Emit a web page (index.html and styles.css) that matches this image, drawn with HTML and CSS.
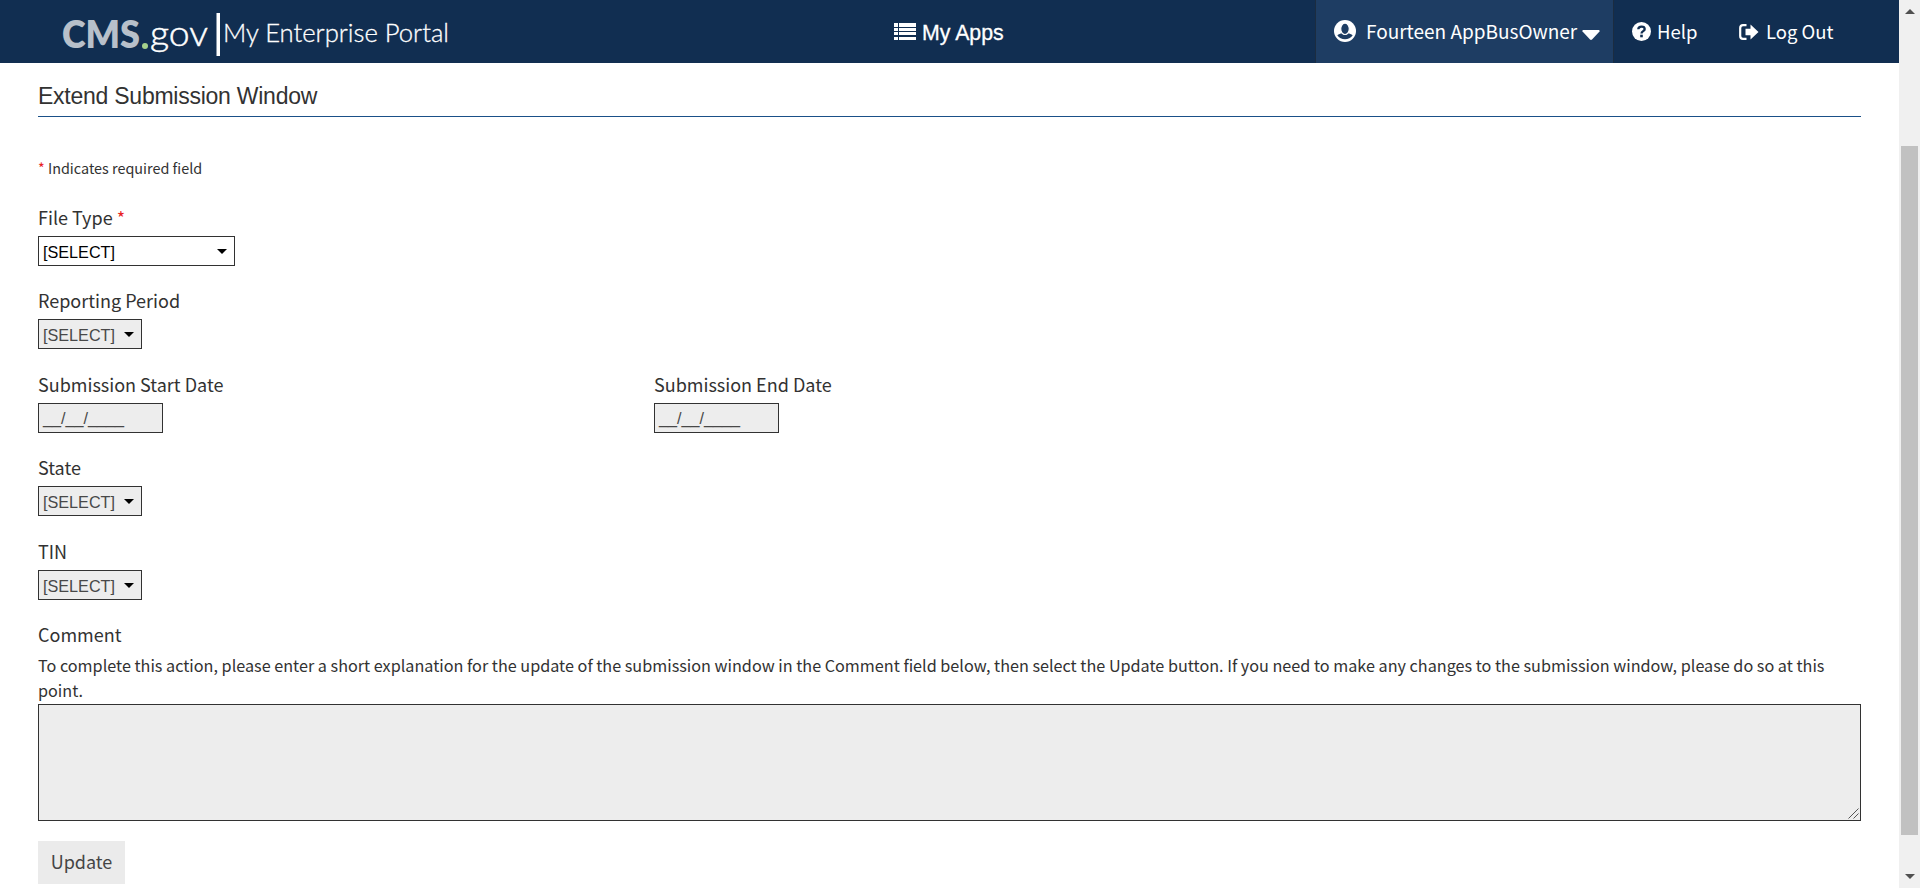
FILE: index.html
```html
<!DOCTYPE html>
<html lang="en">
<head>
<meta charset="utf-8">
<title>Extend Submission Window</title>
<link rel="stylesheet" href="styles.css">
</head>
<body>
<div class="page">
  <div class="viewport">
    <header class="topbar">
      <svg class="logo" width="400" height="63" viewBox="0 0 400 63">
        <text class="logo-cms" x="1" y="48" textLength="78" lengthAdjust="spacingAndGlyphs">CMS</text>
        <circle cx="84" cy="46" r="3" fill="#a5d28c"/>
        <text class="logo-gov" x="89" y="46" textLength="58" lengthAdjust="spacingAndGlyphs">gov</text>
        <rect x="155.500" y="13" width="3.500" height="43" fill="#fff"/>
        <text class="logo-mep" x="162" y="42" textLength="226" lengthAdjust="spacingAndGlyphs">My Enterprise Portal</text>
      </svg>
      <a class="apps">
        <svg width="22" height="17" viewBox="0 0 22 17" fill="#fff"><path d="M0 0h4v4H0zM5 0h17v4H5zM0 5h4v3H0zM5 5h17v3H5zM0 9h4v3H0zM5 9h17v3H5zM0 14h4v3H0zM5 14h17v3H5z"/></svg>
        <span>My Apps</span>
      </a>
      <nav class="links">
        <a class="user">
          <svg class="avatar" width="22" height="22" viewBox="0 0 22 22"><circle cx="11" cy="11" r="11" fill="#fff"/><path d="M3.300 15.300C4.800 14 6.300 13.700 8 13.300 9.500 15 12.500 15 14 13.300 15.700 13.700 17.200 14 18.700 15.300 15.300 20.500 6.700 20.500 3.300 15.300Z" fill="#1e3d63"/><ellipse cx="11" cy="8.800" rx="4.300" ry="5.700" fill="#1e3d63" stroke="#fff" stroke-width="1.200"/></svg>
          <span class="user-name">Fourteen AppBusOwner</span>
          <svg class="user-caret" width="18" height="10" viewBox="0 0 18 10"><path d="M1 0h16q1 .5.500 1.500L10 9.500q-1 .8-2 0L.5 1.500Q0 .5 1 0z" fill="#fff"/></svg>
        </a>
        <a class="help">
          <svg width="19" height="19" viewBox="0 0 19 19"><circle cx="9.500" cy="9.500" r="9.500" fill="#fff"/><path d="M6.300 7.200C6.500 3.800 12.500 3.700 12.700 7 12.800 9.200 9.500 9 9.500 11.500" fill="none" stroke="#112e51" stroke-width="2.300"/><rect x="8.200" y="12.700" width="2.600" height="2.600" fill="#112e51"/></svg>
          <span>Help</span>
        </a>
        <a class="logout">
          <svg width="20" height="16" viewBox="0 0 20 16"><path d="M7.500 1.200H4Q1.200 1.200 1.200 4v8q0 2.800 2.800 2.800h3.500" fill="none" stroke="#fff" stroke-width="2.200"/><path d="M6.500 4.800h5V.5L19.500 8l-8 7.500v-4.300h-5z" fill="#fff"/></svg>
          <span>Log Out</span>
        </a>
      </nav>
    </header>
    <main class="content">
      <h1>Extend Submission Window</h1>
      <p class="required-note"><span class="star">*</span> Indicates required field</p>
      <div class="field">
        <label>File Type <span class="star">*</span></label>
        <div class="control select wide"><span>[SELECT]</span><i class="caret"></i></div>
      </div>
      <div class="field">
        <label>Reporting Period</label>
        <div class="control select off"><span>[SELECT]</span><i class="caret"></i></div>
      </div>
      <div class="row">
        <div class="field">
          <label>Submission Start Date</label>
          <div class="control date off">__/__/____</div>
        </div>
        <div class="field">
          <label>Submission End Date</label>
          <div class="control date off">__/__/____</div>
        </div>
      </div>
      <div class="field">
        <label>State</label>
        <div class="control select off"><span>[SELECT]</span><i class="caret"></i></div>
      </div>
      <div class="field">
        <label>TIN</label>
        <div class="control select off"><span>[SELECT]</span><i class="caret"></i></div>
      </div>
      <label class="comment-label">Comment</label>
      <p class="hint">To complete this action, please enter a short explanation for the update of the submission window in the Comment field below, then select the Update button. If you need to make any changes to the submission window, please do so at this<br>point.</p>
      <div class="comment-box">
        <svg width="11" height="11" viewBox="0 0 11 11"><path d="M.5 10.500l10-10M5.500 10.500l5-5" stroke="#555" stroke-width="1"/></svg>
      </div>
      <button class="update">Update</button>
    </main>
  </div>
  <div class="scrollbar">
    <i class="arrow up"></i>
    <div class="thumb"></div>
    <i class="arrow down"></i>
  </div>
</div>
</body>
</html>
```
FILE: styles.css
```css
* { box-sizing: border-box; }
body {
  margin: 0;
  overflow: hidden;
  background: #fff;
  color: #323232;
  font-family: "Noto Sans CJK SC", "Open Sans", sans-serif;
}
.page { display: flex; width: 1920px; height: 888px; }
.viewport { width: 1899px; }

.topbar {
  display: flex;
  height: 63px;
  padding-left: 61px;
  background: #112e51;
  color: #fff;
}
.logo { flex: none; }
.logo text { font-family: Lato, sans-serif; fill: #fff; }
.logo .logo-cms { font-size: 37px; font-weight: 800; fill: #b8c0ca; }
.logo .logo-gov { font-size: 35px; font-weight: 300; stroke: #fff; stroke-width: 0.5px; }
.logo .logo-mep { font-size: 25px; font-weight: 300; stroke: #fff; stroke-width: 0.3px; }
.apps {
  display: flex;
  gap: 6px;
  margin-left: 433px;
  padding-top: 23px;
  font: 21.300px/20px "Liberation Sans", sans-serif;
  -webkit-text-stroke: 0.3px #fff;
}
.links { display: flex; margin-left: auto; font-size: 18.500px; line-height: 62px; }
.links a { display: flex; white-space: nowrap; }
.user {
  width: 299px;
  padding-left: 18px;
  border: solid #1b2c40;
  border-width: 0 1px;
  background: #1e3d63;
}
.avatar { margin-top: 20px; }
.user-name { margin-left: 10px; width: 212px; font-size: 19px; }
.user-caret { margin: 30px 0 0 4px; }
.help { width: 107px; padding-left: 18px; gap: 6px; }
.help svg { margin-top: 22px; }
.logout { width: 178px; padding-left: 18px; gap: 7px; }
.logout svg { margin-top: 24px; }

.content { padding: 0 38px; }
h1 {
  height: 54px;
  margin: 0;
  padding-top: 18px;
  border-bottom: 1px solid #1a5088;
  font: 23px/30px "Liberation Sans", sans-serif;
  letter-spacing: -0.25px;
}
.required-note { height: 84px; margin: 0; padding-top: 40px; font-size: 14.4px; line-height: 22px; }
.star { color: #e8231f; }
.field { height: 83.400px; }
.field label { display: block; height: 35px; line-height: 32px; }
label { font-size: 18px; }
.row { display: grid; grid-template-columns: 616px 1fr; }
.control {
  height: 30px;
  padding-left: 4px;
  border: 1px solid #323232;
  background: #fff;
  color: #000;
  font: 16.200px/30px "Liberation Sans", sans-serif;
}
.select { display: flex; justify-content: space-between; width: 104px; padding-right: 7px; }
.select.wide { width: 197px; }
.off { background: #ededed; color: #484848; }
.date { width: 125px; line-height: 28px; }
.caret {
  margin-top: 12px;
  border: solid transparent;
  border-width: 5px 5px 0;
  border-top-color: #000;
  height: 0;
}
.comment-label { display: block; height: 38px; line-height: 32px; }
.hint { height: 48px; margin: 0; font-size: 16.200px; line-height: 25px; white-space: nowrap; }
.comment-label + .hint { height: 51px; margin-top: -3px; }
.comment-box {
  display: flex;
  justify-content: flex-end;
  align-items: flex-end;
  height: 117px;
  padding: 1px;
  border: 1px solid #323232;
  background: #ededed;
}
.update {
  display: block;
  width: 87px;
  height: 43px;
  margin-top: 20px;
  padding: 0 0 2px;
  border: 0;
  background: #ebebeb;
  color: #454545;
  font: 18px/40px "Noto Sans CJK SC", sans-serif;
}

.scrollbar {
  display: flex;
  flex-direction: column;
  align-items: center;
  width: 21px;
  padding: 9px 0;
  background: #f0f0f0;
}
.arrow { width: 0; height: 0; border: solid transparent; }
.up { border-width: 0 5px 5px; border-bottom-color: #505050; }
.down { margin-top: auto; border-width: 5px 5px 0; border-top-color: #505050; }
.thumb { width: 17px; height: 689px; margin-top: 132px; background: #c1c1c1; }
```
